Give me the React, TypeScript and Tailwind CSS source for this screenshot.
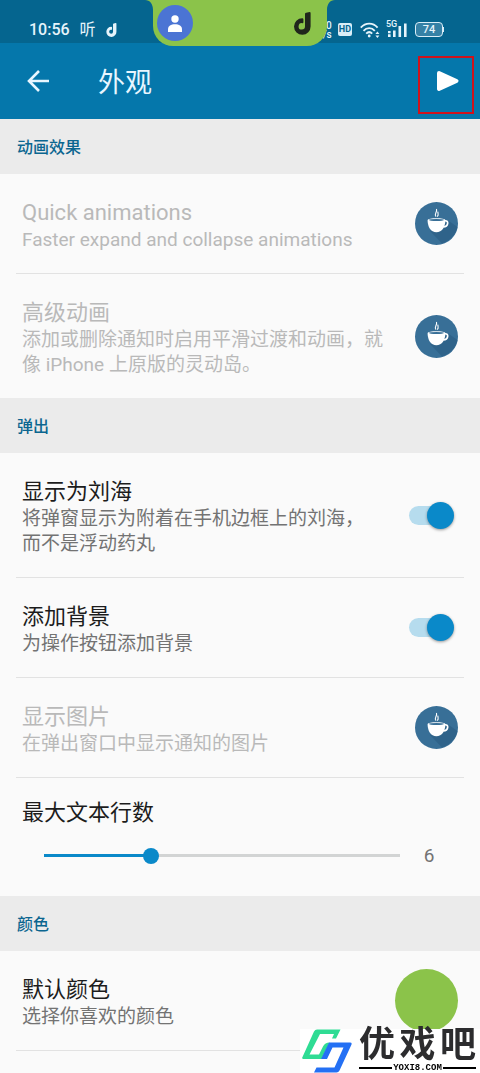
import { useState } from "react";
import type { ReactNode } from "react";

function MusicNote({ className }: { className: string }) {
  return (
    <svg viewBox="0 0 17 23" className={className} aria-hidden="true">
      <path
        d="M11 1.8 Q11.2 0.9 12.2 0.7 L15.6 0 Q16.6 0 16.6 1 V14.3 A8.3 8.3 0 1 1 8.3 6.2 Q9.4 6.2 9.4 7.2 V10.2 Q9.4 11.2 8.4 11.2 A3.2 3.2 0 1 0 11 14.2 Z"
        fill="currentColor"
      />
    </svg>
  );
}

function Island() {
  return (
    <div className="absolute top-0 left-1/2 z-10 flex h-[46px] w-[174px] -translate-x-1/2 items-center justify-between rounded-b-[20px] bg-[#8bc34a] pr-4 pl-1 text-[#20261c]">
      <svg viewBox="0 0 8 10" className="absolute top-0 -left-2 h-[10px] w-2" aria-hidden="true">
        <path d="M0 0 H8 V10 C8 4 5 0 0 0 Z" fill="#8bc34a" />
      </svg>
      <svg viewBox="0 0 8 10" className="absolute top-0 -right-2 h-[10px] w-2" aria-hidden="true">
        <path d="M8 0 H0 V10 C0 4 3 0 8 0 Z" fill="#8bc34a" />
      </svg>
      <span className="grid size-9 place-items-center rounded-full bg-[#4b74d4]">
        <svg viewBox="0 0 14 17" className="h-[17px] w-[14px]" aria-hidden="true">
          <circle cx="7" cy="4" r="3.7" fill="#fff" />
          <path d="M0 17 V14.5 C0 10.8 3 9.3 7 9.3 S14 10.8 14 14.5 V17 Z" fill="#fff" />
        </svg>
      </span>
      <MusicNote className="h-[23px] w-[17px]" />
    </div>
  );
}

function StatusBar() {
  return (
    <div className="flex h-[43px] items-center bg-[#05658f] pt-4 pr-9 pl-[29px] text-[#e6f4fb]">
      <span className="text-base leading-6 font-medium">10:56</span>
      <span className="ml-[10px] text-base leading-6">听</span>
      <MusicNote className="ml-[10px] h-[14px] w-[11px]" />
      <span className="ml-auto flex flex-col text-right text-[10px] leading-[9px] font-medium">
        <span>0</span>
        <span>/s</span>
      </span>
      <span className="ml-[6px] rounded-[2px] bg-[#d9edf7] px-px text-[9px] leading-[13px] font-bold text-[#05658f]">
        HD
      </span>
      <svg viewBox="0 0 20 16" className="ml-2 h-4 w-5" fill="none" stroke="currentColor" strokeWidth="1.9" aria-label="Wi-Fi">
        <path d="M0.8 5.6 C5.5 0.3 13 0.3 17.6 5.6" />
        <path d="M3.5 8.8 C6.8 5.2 11.6 5.2 14.8 8.8" />
        <path d="M6.2 11.6 C8 9.8 10.4 9.8 12.2 11.6" />
        <circle cx="9.2" cy="14" r="1.4" fill="currentColor" stroke="none" />
        <path d="M15.4 12 L17.4 9.4 L19.4 12 Z M15.4 13.4 L17.4 16 L19.4 13.4 Z" fill="currentColor" stroke="none" />
      </svg>
      <span className="relative ml-[7px] h-4 w-5">
        <span className="absolute -top-[2px] -left-px text-[9px] leading-[9px] font-medium">5G</span>
        <svg viewBox="0 0 20 16" className="h-4 w-5" fill="currentColor" aria-label="Signal">
          <path d="M1 9 h2.6 v2.2 h-2.6 Z M1 12.2 h2.6 v2.8 h-2.6 Z M6 8.5 h2.6 v6.5 h-2.6 Z M11.5 4 h2.6 v11 h-2.6 Z M17 1.5 h2.6 v13.5 h-2.6 Z" />
        </svg>
      </span>
      <span className="ml-2 grid h-[15px] w-[28px] place-items-center rounded-[4px] border border-[#d9edf7] bg-[#3581a6] text-[11px] leading-[13px] font-medium">
        74
      </span>
      <span className="h-[5px] w-px bg-[#d9edf7]" />
    </div>
  );
}

function TopBar() {
  return (
    <header className="flex h-[76px] items-center bg-[#0577ab] pr-5 pl-[27px] text-[#e8f6ff]">
      <button type="button" aria-label="返回">
        <svg viewBox="0 0 23 22" className="h-[22px] w-[23px]" fill="none" stroke="currentColor" strokeWidth="2.6" aria-hidden="true">
          <path d="M22 11 H2.5 M12 1 L2 11 L12 21" />
        </svg>
      </button>
      <h1 className="ml-[48px] pt-1 text-[27px] leading-9">外观</h1>
      <button type="button" aria-label="播放" className="relative ml-auto">
        <svg viewBox="0 0 24 22" className="h-[22px] w-6" aria-hidden="true">
          <path
            d="M3 3 L20.5 11 L3 19 Z"
            fill="#fff"
            stroke="#fff"
            strokeWidth="4"
            strokeLinejoin="round"
          />
        </svg>
        <span className="absolute -top-[14px] -left-[18px] h-[58px] w-14 border-2 border-[#d0121b]" />
      </button>
    </header>
  );
}

function Section({ title, children }: { title: string; children: ReactNode }) {
  return (
    <section>
      <h2 className="flex h-[55px] items-center bg-[#ebebeb] px-[17px] pt-[2px] text-base leading-6 font-medium text-[#0b6690]">
        {title}
      </h2>
      <div className="divide-y divide-[#e2e2e2] px-4">{children}</div>
    </section>
  );
}

type RowProps = {
  title: string;
  text: string;
  htmlFor?: string;
  disabled?: boolean;
  children: ReactNode;
};

function Row({ title, text, htmlFor, disabled, children }: RowProps) {
  const Text = htmlFor ? "label" : "div";
  return (
    <div className="flex items-center px-[6px]">
      <Text htmlFor={htmlFor} className="min-w-0 flex-1 pt-6 pb-[21px]">
        <span className={`block text-[22px] leading-[29px] ${disabled ? "text-[#b9b9b9]" : "text-[#1c1c1c]"}`}>
          {title}
        </span>
        <span className={`block text-[19px] leading-[25px] ${disabled ? "text-[#b9b9b9]" : "text-[#737373]"}`}>
          {text}
        </span>
      </Text>
      {children}
    </div>
  );
}

function CoffeeButton() {
  return (
    <button type="button" aria-label="请我喝咖啡" className="ml-6 shrink-0">
      <svg viewBox="0 0 43 43" className="size-[43px]" aria-hidden="true">
        <circle cx="21.5" cy="21.5" r="21.5" fill="#386f97" />
        <path d="M15 29 L27 41.5 C35 39 41 32 42.4 25 L32.5 18 Z" fill="#2f638a" />
        <path
          d="M12.6 18 C12.6 15.6 30.4 15.6 30.4 18 C30.4 25 27 30.3 21.4 30.3 C15.8 30.3 12.6 25 12.6 18 Z"
          fill="#fff"
        />
        <ellipse cx="21.4" cy="18" rx="7.6" ry="0.9" fill="#386f97" />
        <path d="M29.8 18.8 C34.2 18 33.4 24.8 28.4 24.8" fill="none" stroke="#fff" strokeWidth="1.7" />
        <path
          d="M21 14.6 C18.4 12.1 22.6 10.6 21.5 7 M22.2 14.6 C24.4 12.6 22.4 11.6 23 9.6"
          fill="none"
          stroke="#fff"
          strokeWidth="1.1"
        />
      </svg>
    </button>
  );
}

type SwitchProps = {
  id: string;
  checked: boolean;
  onChange: (checked: boolean) => void;
};

function Switch({ id, checked, onChange }: SwitchProps) {
  return (
    <span className="flex shrink-0 pr-1 pl-8">
      <input
        id={id}
        type="checkbox"
        role="switch"
        checked={checked}
        onChange={(e) => onChange(e.target.checked)}
        className="relative flex h-[27px] w-[45px] appearance-none items-center before:h-[19px] before:w-10 before:rounded-full before:bg-[#cfcfcf] after:absolute after:left-0 after:size-[27px] after:rounded-full after:bg-[#f5f5f5] after:shadow-[0_1px_3px_rgba(0,0,0,0.4)] checked:before:bg-[#b6dcee] checked:after:left-[18px] checked:after:bg-[#0a89c9]"
      />
    </span>
  );
}

const MAX_LINES = 20;

export default function App() {
  const [notch, setNotch] = useState(true);
  const [background, setBackground] = useState(true);
  const [lines, setLines] = useState(6);

  return (
    <div className="relative min-h-screen bg-[#fafafa] font-[Roboto,'Noto_Sans_CJK_SC',sans-serif]" lang="zh-CN">
      <StatusBar />
      <Island />
      <TopBar />

      <main>
        <Section title="动画效果">
          <Row title="Quick animations" text="Faster expand and collapse animations" disabled>
            <CoffeeButton />
          </Row>
          <Row title="高级动画" text="添加或删除通知时启用平滑过渡和动画，就像 iPhone 上原版的灵动岛。" disabled>
            <CoffeeButton />
          </Row>
        </Section>

        <Section title="弹出">
          <Row title="显示为刘海" text="将弹窗显示为附着在手机边框上的刘海，而不是浮动药丸" htmlFor="notch">
            <Switch id="notch" checked={notch} onChange={setNotch} />
          </Row>
          <Row title="添加背景" text="为操作按钮添加背景" htmlFor="background">
            <Switch id="background" checked={background} onChange={setBackground} />
          </Row>
          <Row title="显示图片" text="在弹出窗口中显示通知的图片" disabled>
            <CoffeeButton />
          </Row>
          <div className="px-[6px] pt-5 pb-7">
            <label htmlFor="lines" className="block text-[22px] leading-[29px] text-[#1c1c1c]">
              最大文本行数
            </label>
            <div className="mt-4 flex items-center pl-[22px]">
              <div className="relative h-[3px] flex-1 bg-[#d2d4d4]">
                <div className="h-full bg-[#0a89c9]" style={{ width: `${(lines / MAX_LINES) * 100}%` }} />
                <input
                  id="lines"
                  type="range"
                  min={0}
                  max={MAX_LINES}
                  value={lines}
                  onChange={(e) => setLines(Number(e.target.value))}
                  className="absolute -inset-x-2 -top-[7px] h-[17px] appearance-none bg-transparent [&::-webkit-slider-thumb]:size-4 [&::-webkit-slider-thumb]:appearance-none [&::-webkit-slider-thumb]:rounded-full [&::-webkit-slider-thumb]:bg-[#0a89c9]"
                />
              </div>
              <output htmlFor="lines" className="w-[58px] text-center text-[19px] leading-[25px] text-[#737373]">
                {lines}
              </output>
            </div>
          </div>
        </Section>

        <Section title="颜色">
          <Row title="默认颜色" text="选择你喜欢的颜色">
            <button type="button" aria-label="默认颜色" className="size-[63px] shrink-0 rounded-full bg-[#8bc34a]" />
          </Row>
          <div />
        </Section>
      </main>

      <div className="fixed right-0 bottom-0 flex h-[44px] w-[180px] bg-white">
        <svg viewBox="0 0 50 44" className="ml-[2px] h-[44px] w-[50px]" aria-hidden="true">
          <path
            d="M15 0.5 H38.5 L34 9.5 H30 L32 5 H18 L7.5 25.5 H17 L21 17.5 Q23 13.5 27.5 13.5 L19.5 30 H1.5 Q-0.5 30 0.5 28 L12 2.5 Q13 0.5 15 0.5 Z"
            fill="#2fdc94"
          />
          <path
            d="M27 13.5 H48 Q50.5 13.5 49.3 16 L37.5 41.5 Q36.5 43.5 34.5 43.5 H12 L14.5 38.5 H32.5 L41.5 18.5 H30.5 L25 30 H19 Z"
            fill="#2470f4"
          />
        </svg>
        <div className="ml-[7px] w-[117px]">
          <p className="flex h-[34px] justify-between text-[36px] leading-8 font-bold text-[#2c2c2e]">
            <span>优</span>
            <span>戏</span>
            <span>吧</span>
          </p>
          <p className="flex items-center gap-px font-['Liberation_Mono',monospace] text-[9px] leading-[10px] font-bold text-black before:h-[2px] before:flex-1 before:bg-black after:h-[2px] after:flex-1 after:bg-black">
            YOXI8.COM
          </p>
        </div>
      </div>
    </div>
  );
}
